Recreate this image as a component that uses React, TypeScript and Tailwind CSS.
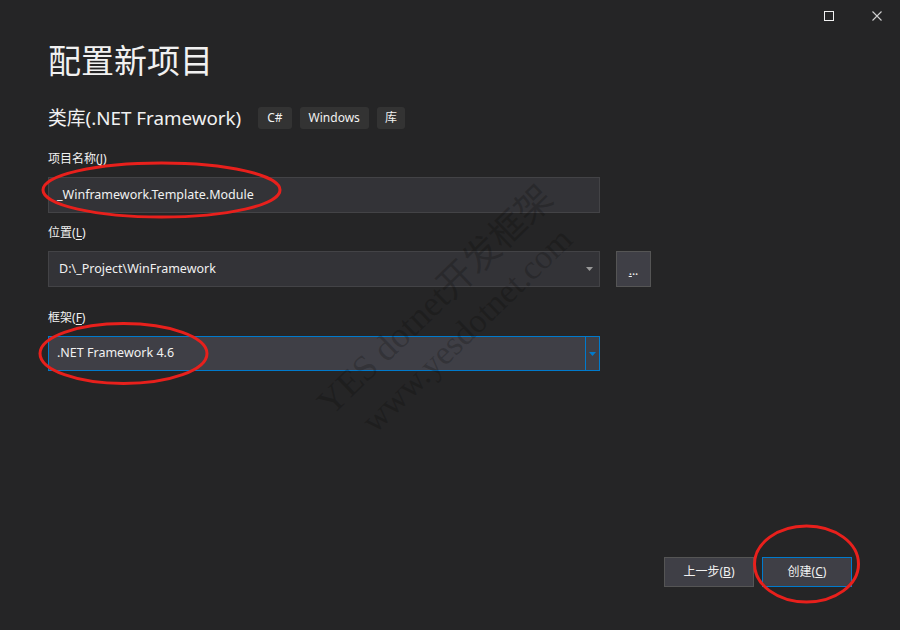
import React from "react";

const cjk = "font-['Segoe_UI','Noto_Sans','Noto_Sans_CJK_SC',sans-serif]";

function Arrow({ color }: { color: string }) {
  return (
    <svg width="7" height="4" viewBox="0 0 7 4" className="block">
      <path d="M0 0H7L3.5 4Z" fill={color} />
    </svg>
  );
}

function Label({ text, acc }: { text: string; acc: string }) {
  return (
    <div className="text-[12px] leading-[16px] text-[#f1f1f1] mb-[10px]">
      {text}(<span className="underline underline-offset-2">{acc}</span>)
    </div>
  );
}

export default function App() {
  return (
    <div className={`relative w-[900px] h-[630px] bg-[#252526] overflow-hidden flex flex-col ${cjk}`}>
      {/* title bar */}
      <div className="flex justify-end items-start h-[41px] pt-[11px] pr-[18px] gap-[38px]">
        <div className="w-[10px] h-[10px] border border-[#f1f1f1]" />
        <svg width="10" height="10" viewBox="0 0 10 10" className="block">
          <path d="M0.5 0.5L9.5 9.5M9.5 0.5L0.5 9.5" stroke="#d0d0d0" strokeWidth="1.1" />
        </svg>
      </div>

      <div className="flex flex-col pl-[48px]">
        <div className="text-[33px] leading-[40px] text-[#f1f1f1]">配置新项目</div>

        <div className="flex items-center h-[22px] mt-[26px]">
          <div className="text-[18.8px] leading-[22px] text-[#f1f1f1]">类库(.NET Framework)</div>
          <div className="flex gap-[8px] ml-[17px]">
            <span className="h-[22px] px-[9px] rounded-[3px] bg-[#333333] text-[12px] leading-[22px] text-[#f1f1f1]">C#</span>
            <span className="h-[22px] px-[9px] rounded-[3px] bg-[#333333] text-[12px] leading-[22px] text-[#f1f1f1]">Windows</span>
            <span className="h-[22px] px-[8px] rounded-[3px] bg-[#333333] text-[12px] leading-[22px] text-[#f1f1f1]">库</span>
          </div>
        </div>

        <div className="mt-[22px]">
          <Label text="项目名称" acc="J" />
          <div className="w-[552px] h-[36px] bg-[#333337] border border-[#434346] flex items-center pl-[8px] text-[12.5px] text-[#f1f1f1]">
            _Winframework.Template.Module
          </div>
        </div>

        <div className="mt-[12px]">
          <Label text="位置" acc="L" />
          <div className="flex gap-[16px]">
            <div className="w-[552px] h-[36px] bg-[#333337] border border-[#434346] flex items-center pl-[10px] pr-[3px] text-[12.5px] text-[#f1f1f1]">
              <span className="flex-1">D:\_Project\WinFramework</span>
              <div className="w-[14px] flex justify-center">
                <Arrow color="#999999" />
              </div>
            </div>
            <div className="w-[35px] h-[36px] bg-[#3f3f46] border border-[#555555] flex items-end justify-center pb-[9px] text-[12px] leading-[12px] text-[#f1f1f1]">
              <span><span className="underline">.</span>..</span>
            </div>
          </div>
        </div>

        <div className="mt-[23px]">
          <Label text="框架" acc="F" />
          <div className="w-[552px] h-[35px] bg-[#3f3f46] border border-[#007acc] flex items-stretch text-[12.5px] text-[#f1f1f1]">
            <div className="flex-1 flex items-center pl-[8px]">.NET Framework 4.6</div>
            <div className="w-[14px] border-l border-[#007acc] flex items-center justify-center">
              <Arrow color="#007acc" />
            </div>
          </div>
        </div>
      </div>

      <div className="mt-auto flex justify-end gap-[8px] pr-[48px] pb-[43px]">
        <button className="w-[90px] h-[30px] bg-[#3f3f46] border border-[#555555] text-[12px] text-[#f1f1f1]">
          上一步(<span className="underline">B</span>)
        </button>
        <button className="w-[90px] h-[30px] bg-[#3f3f46] border border-[#007acc] text-[12px] text-[#f1f1f1]">
          创建(<span className="underline">C</span>)
        </button>
      </div>

      {/* watermark */}
      <div className="absolute left-[435px] top-[300px] -translate-x-1/2 -translate-y-1/2 -rotate-[44deg] whitespace-nowrap text-[36px] leading-none text-black/20 font-['Liberation_Serif','Noto_Sans_CJK_SC',serif] pointer-events-none">
        YES dotnet开发框架
      </div>
      <div className="absolute left-[467px] top-[330px] -translate-x-1/2 -translate-y-1/2 -rotate-[44deg] whitespace-nowrap text-[34px] leading-none text-black/20 font-['Liberation_Serif',serif] pointer-events-none">
        www.yesdotnet.com
      </div>

      {/* red annotation ellipses */}
      <svg className="absolute inset-0 pointer-events-none" width="900" height="630" viewBox="0 0 900 630">
        <ellipse cx="161.5" cy="190" rx="118.5" ry="27" fill="none" stroke="#e8201c" strokeWidth="3" />
        <ellipse cx="123.5" cy="353.5" rx="83.5" ry="30" fill="none" stroke="#e8201c" strokeWidth="3" />
        <ellipse cx="806.5" cy="564" rx="52" ry="38" fill="none" stroke="#e8201c" strokeWidth="3" />
      </svg>
    </div>
  );
}
